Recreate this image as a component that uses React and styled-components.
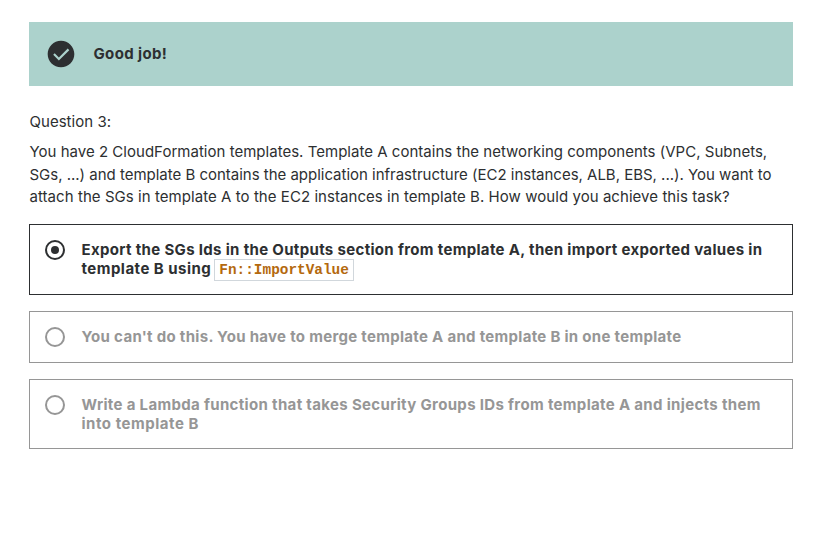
import React from "react";
import styled, { createGlobalStyle } from "styled-components";

const GlobalStyle = createGlobalStyle`
  body {
    margin: 0;
    background: #fff;
    color: #2d2f31;
    font-family: Inter, "Liberation Sans", sans-serif;
    font-size: 15px;
  }
`;

const Page = styled.main`
  width: 764px;
  padding: 22px 0 0 29px;
`;

const Banner = styled.div`
  display: flex;
  align-items: center;
  gap: 16.5px;
  height: 64px;
  padding-left: 16px;
  background: #acd2cc;
  font-weight: 700;
  line-height: 20px;
`;

const BannerIcon = styled.svg`
  display: block;
  width: 32px;
  height: 32px;
`;

const Line = styled.span`
  display: block;
  white-space: nowrap;
  letter-spacing: ${({ $tracking = 0 }) => $tracking}px;
`;

const QuestionLabel = styled.div`
  margin-top: 25px;
  padding-left: 0.5px;
  line-height: 22px;
`;

const Prompt = styled.div`
  margin: 8.2px 0 15.8px;
  padding-left: 0.5px;
  line-height: 22.4px;
`;

const Answers = styled.ul`
  display: flex;
  flex-direction: column;
  gap: 16px;
  list-style: none;
  margin: 0;
  padding: 0;
`;

const Answer = styled.li`
  box-sizing: border-box;
  display: flex;
  gap: 16.5px;
  height: ${({ $height }) => $height}px;
  padding: 15px;
  border: 1px solid ${({ $selected }) => ($selected ? "#2d2f31" : "#969696")};
  color: ${({ $selected }) => ($selected ? "#2d2f31" : "#969696")};
  font-weight: 700;
  line-height: 19px;
`;

const Radio = styled.svg`
  display: block;
  flex: none;
  width: 20px;
  height: 20px;
`;

const Code = styled.code`
  display: inline-block;
  box-sizing: border-box;
  height: 22px;
  margin: -2px 0 -1px 3px;
  padding: 0 4px;
  border: 1px solid #d1d7dc;
  background: #fff;
  color: #b4690e;
  font: 700 14.4px/20px "Liberation Mono", monospace;
  letter-spacing: 0;
`;

const prompt = [
  ["You have 2 CloudFormation templates. Template A contains the networking components (VPC, Subnets,", 0.02],
  ["SGs, ...) and template B contains the application infrastructure (EC2 instances, ALB, EBS, ...). You want to", -0.014],
  ["attach the SGs in template A to the EC2 instances in template B. How would you achieve this task?", 0.056],
];

const answers = [
  {
    selected: true,
    height: 71,
    lines: [
      ["Export the SGs Ids in the Outputs section from template A, then import exported values in", 0.33],
      ["template B using", 0.48, "Fn::ImportValue"],
    ],
  },
  {
    height: 52,
    lines: [["You can't do this. You have to merge template A and template B in one template", 0.3]],
  },
  {
    height: 70,
    lines: [
      ["Write a Lambda function that takes Security Groups IDs from template A and injects them", 0.332],
      ["into template B", 0.53],
    ],
  },
];

export default function App() {
  return (
    <>
      <GlobalStyle />
      <Page>
        <Banner>
          <BannerIcon viewBox="0 0 24 24" fill="#2d2f31">
            <path d="m10.4 16.9 7.8-7.8-1.15-1.15-6.65 6.65-3.1-3.1-1.15 1.15zM12 22C6.48 22 2 17.52 2 12S6.48 2 12 2s10 4.48 10 10-4.48 10-10 10z" fillRule="evenodd" />
          </BannerIcon>
          <Line $tracking={0.36}>Good job!</Line>
        </Banner>
        <QuestionLabel>
          <Line $tracking={0.03}>Question 3:</Line>
        </QuestionLabel>
        <Prompt>
          {prompt.map(([text, tracking]) => (
            <Line key={text} $tracking={tracking}>{text}</Line>
          ))}
        </Prompt>
        <Answers>
          {answers.map(({ selected, height, lines }) => (
            <Answer key={lines[0][0]} $selected={selected} $height={height}>
              <Radio viewBox="0 0 20 20">
                <circle cx="10" cy="10" r="9" fill="none" stroke="currentColor" strokeWidth="2" />
                {selected && <circle cx="10" cy="10" r="4" fill="currentColor" />}
              </Radio>
              <div>
                {lines.map(([text, tracking, code]) => (
                  <Line key={text} $tracking={tracking}>
                    {text}
                    {code && <Code>{code}</Code>}
                  </Line>
                ))}
              </div>
            </Answer>
          ))}
        </Answers>
      </Page>
    </>
  );
}
